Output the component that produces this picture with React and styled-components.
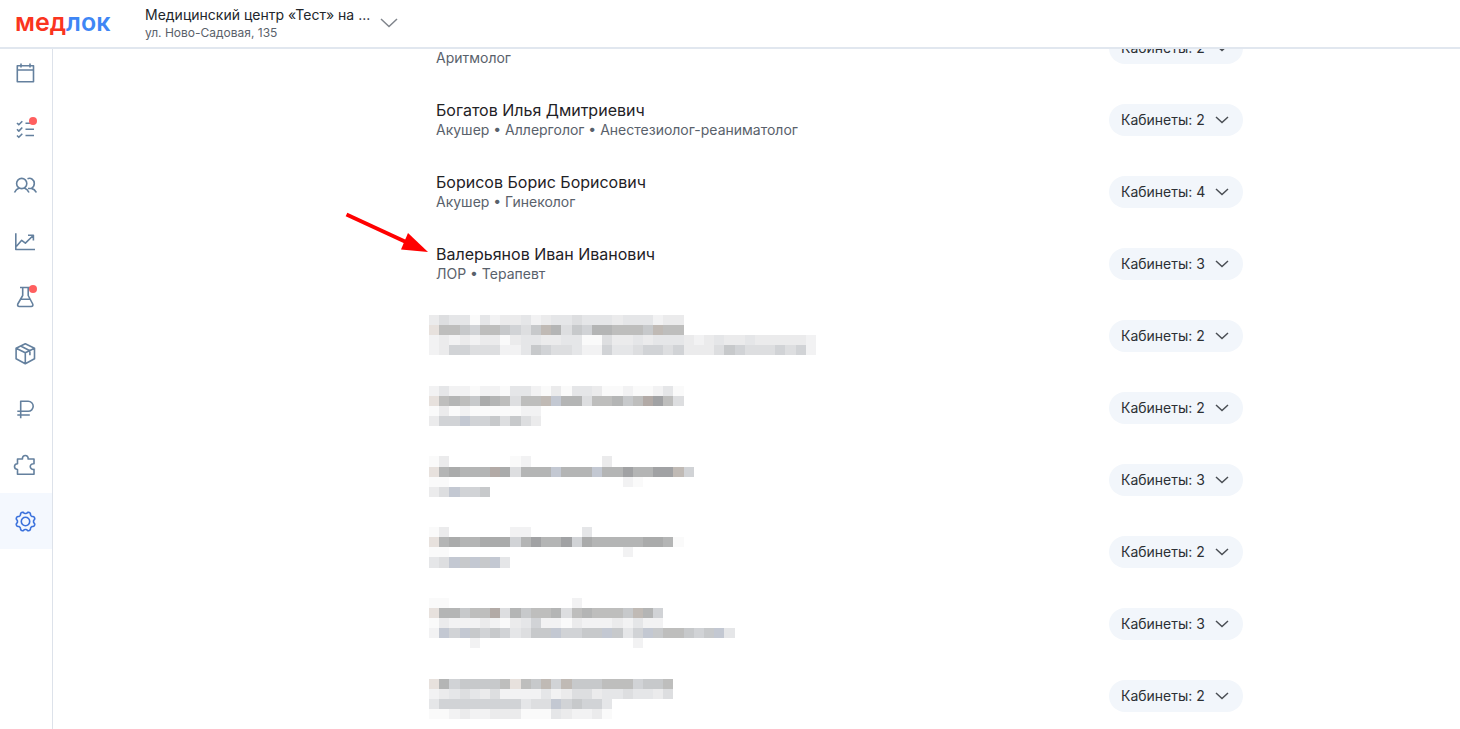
import { useLayoutEffect, useRef } from "react";
import styled, { createGlobalStyle } from "styled-components";

const GlobalStyle = createGlobalStyle`
    *{
        box-sizing: border-box;
    }
    body{
        margin: 0;
        background: #fff;
        color: #22262b;
        font-family: Inter, "Noto Sans", sans-serif;
        font-size: 14px;
        line-height: 20px;
    }
`;

const Page = styled.div`
    display: flex;
    flex-direction: column;
    height: 100vh;
    overflow: hidden;
`;

const Header = styled.header`
    display: flex;
    align-items: center;
    flex-shrink: 0;
    gap: 34px;
    height: 49px;
    padding: 0 15px 2px;
    background: #fff;
    border-bottom: 2px solid #e1e7ef;
    position: relative;
    z-index: 1;
`;

const Logo = styled.a`
    width: 96px;
    font-size: 25px;
    line-height: 28px;
    padding-bottom: 2px;
    font-weight: 600;
    color: #fa3420;
    text-decoration: none;
    span{
        color: #3f86f5;
    }
`;

const ClinicButton = styled.button`
    display: flex;
    align-items: center;
    gap: 10px;
    padding: 0;
    border: 0;
    background: transparent;
    font-family: inherit;
    text-align: left;
    color: #22262b;
    cursor: pointer;
    svg{
        color: #80858c;
    }
`;

const ClinicName = styled.span`
    display: block;
    font-size: 14px;
    line-height: 20px;
`;

const ClinicAddress = styled.span`
    display: block;
    font-size: 12px;
    line-height: 16px;
    color: #5b626b;
`;

const Body = styled.div`
    display: flex;
    flex: 1;
    min-height: 0;
`;

const Sidebar = styled.nav`
    display: flex;
    flex-direction: column;
    flex-shrink: 0;
    width: 53px;
    margin-top: -4px;
    border-right: 1px solid #dde2ea;
`;

const NavLink = styled.a`
    display: flex;
    align-items: center;
    height: 56px;
    padding-left: 13px;
    color: ${props => props.$active ? "#3a71dc" : "#64809e"};
    background: ${props => props.$active ? "#f4f8fe" : "transparent"};
`;

const IconBox = styled.span`
    display: block;
    position: relative;
    width: 24px;
    height: 24px;
    svg{
        display: block;
    }
`;

const Dot = styled.span`
    position: absolute;
    top: 0;
    right: 0;
    width: 8px;
    height: 8px;
    border-radius: 50%;
    background: #ff5f5f;
`;

const Main = styled.main`
    flex: 1;
    min-width: 0;
    padding: 0 217px 0 383px;
    overflow-y: auto;
    scrollbar-width: none;
`;

const DoctorList = styled.ul`
    position: relative;
    margin: 0;
    padding: 0;
    list-style: none;
`;

const DoctorRow = styled.li`
    display: flex;
    align-items: center;
    justify-content: space-between;
    position: relative;
    height: 72px;
`;

const DoctorName = styled.div`
    min-height: 20px;
    font-size: 16px;
    line-height: 20px;
    color: #1f2226;
`;

const Specialties = styled.div`
    font-size: 14px;
    line-height: 20px;
    color: #59616b;
`;

const RoomsButton = styled.button`
    display: flex;
    align-items: center;
    justify-content: space-between;
    width: 134px;
    height: 32px;
    padding: 0 14px 0 12px;
    border: 0;
    border-radius: 16px;
    background: #f2f6fb;
    color: #2c3035;
    font-family: inherit;
    font-size: 14px;
    line-height: 20px;
    cursor: pointer;
    svg{
        color: #4a4e54;
    }
`;

const Arrow = styled.svg`
    position: absolute;
    left: -92px;
    top: -17px;
`;

const Mosaic = styled.svg`
    position: absolute;
    left: -7px;
    top: 303px;
`;

const shades = {
    a: "#fafafa", b: "#f2f2f3", c: "#ebebec", d: "#e5e6e8", e: "#dddee0",
    f: "#d1d3d6", g: "#c7c9cb", h: "#bebebd", i: "#b4b5b5", j: "#aaabab",
    k: "#a1a2a4", w: "#e7e1dd", n: "#c0bab5", m: "#b2aaa6", l: "#c3c8d2",
};

// one string per mosaic line, one letter per cell
const mosaic = {
    0: "ceddadbccdbcddedddcdddbcc",
    1: "whhgfhhgfegniegfiihhhgnhh",
    2: "bcbcbccacddccddaaeccdcdddcbcdccdcccccb",
    3: "bcffeeebbdgfeedbbfddeffefcccegfeeefefb",
    7: "bdbbabbaddbacaddcaabaabda",
    8: "whihgjihehhnliiehhighmkhe",
    9: "acabaaaaabb",
    10: "cfflffgegec",
    14: "ac......ab.......c",
    15: "wijiiimjeiiiliiiliikiikknf",
    16: "aa.................ba",
    17: "celffg",
    21: "ac......bb.....d",
    22: "wijiijjjfikiikfjiiiiijjia",
    23: "aa.................b",
    24: "delglgld",
    28: "aa............b",
    29: "wiighhmeighhiehihhhgnif",
    30: "acbbbcbacdfbbacbbbcbdbb",
    31: "blflgfgfdegglffgglgdflghhgfgld",
    32: "....b...............b",
    36: "wifgggghwhgnfnggghhhfggh",
    37: "bcdedcebbbbdbceecddeddce",
    38: "dffffffffdeelfgffd",
    39: "aabcbbcccaaadcbbca",
};

const gear = Array.from({ length: 96 }, (_, i) => {
    const t = (i / 96) * Math.PI * 2;
    const r = 8.9 + 0.9 * Math.tanh(1.8 * Math.cos(8 * (t - Math.PI / 8)));
    return `${(12.5 + r * Math.cos(t)).toFixed(2)} ${(12.5 + r * Math.sin(t)).toFixed(2)}`;
}).join("L");

const navItems = [
    { title: "Календарь", d: "M4.3 4.7h16.2v16H4.3zM4.3 9h16.2M8 2.5v4M17 2.5v4" },
    { title: "Задачи", dot: true, d: "M4 6l1.8 1.8L9.3 4.2M4 12.3l1.8 1.8 3.5-3.6M4 18.5l1.8 1.8 3.5-3.6M12.5 6.2H21M12.5 12.3H21M12.5 18.5H21" },
    { title: "Пациенты", d: "M8.7 5.4a5.1 5.1 0 1 1 0 10.2a5.1 5.1 0 1 1 0-10.2zM1.500 19.500c1-2.200 2.600-3.700 4.800-4.400M11.200 15.100c2 .6 3.800 2.200 4.800 4.400M14.500 5.700c3.500-1.300 6.800 1.100 6.800 4.800c0 2.400-1.200 4-2.900 4.900c2 .5 3.900 2 4.900 4.100M15 15.500h3.400" },
    { title: "Статистика", d: "M2.8 4.3v16.2H22M3.5 17.3l5.200-6 3.700 2.800 7.800-7.600M15 6.200h5.400v5.400" },
    { title: "Анализы", dot: true, d: "M7 2.500h10.500M9.700 2.500v8L4.800 19c-.6 1.300.1 2.500 1.500 2.500h11.900c1.400 0 2.100-1.200 1.500-2.500L15.200 10.500V2.500M7.500 14.200h9.800" },
    { title: "Склад", d: "M12.300 2.800l9.200 4.400v10.600l-9.200 4.900-9.200-4.900V7.200zM3.100 7.200l9.200 4.600 9.200-4.600M12.300 11.800v10.900M7.700 5l9.200 4.700v4.500" },
    { title: "Финансы", d: "M7.700 21.300V4.300h7.500a5 5 0 0 1 0 10H4.300M4.300 18h12.500" },
    { title: "Интеграции", d: "M4.500 21.300v-4.800c-4-.3-4-5.500 0-5.800V6h5c-.7-4.700 6.300-4.700 5.600 0h5.900v4.800c-5-.6-5 6.200 0 5.600v4.900z" },
    { title: "Настройки", active: true, d: `M${gear}ZM12.500 8.300a4.200 4.200 0 1 1 0 8.400a4.200 4.200 0 1 1 0-8.400z` },
];

const doctors = [
    { specialties: "Аритмолог", rooms: 2 },
    { name: "Богатов Илья Дмитриевич", specialties: "Акушер • Аллерголог • Анестезиолог-реаниматолог", rooms: 2 },
    { name: "Борисов Борис Борисович", specialties: "Акушер • Гинеколог", rooms: 4 },
    { name: "Валерьянов Иван Иванович", specialties: "ЛОР • Терапевт", rooms: 3, marked: true },
    { rooms: 2 },
    { rooms: 2 },
    { rooms: 3 },
    { rooms: 2 },
    { rooms: 3 },
    { rooms: 2 },
];

function Chevron({ width, height }) {
    return (
        <svg width={width} height={height} viewBox={`0 0 ${width} ${height}`} fill="none" stroke="currentColor" strokeWidth="1.5">
            <path d={`M1 1L${width / 2} ${height - 1.5}L${width - 1} 1`} />
        </svg>
    );
}

function NavItem({ title, d, dot, active }) {
    return (
        <NavLink href="#" aria-label={title} $active={active}>
            <IconBox>
                <svg width="24" height="24" viewBox="0 0 24 24" fill="none" stroke="currentColor" strokeWidth="1.6" strokeLinejoin="round">
                    <path d={d} />
                </svg>
                {dot && <Dot />}
            </IconBox>
        </NavLink>
    );
}

function HiddenNames() {
    return (
        <Mosaic width="387" height="404" viewBox="0 0 38 40" preserveAspectRatio="none" shapeRendering="crispEdges" aria-hidden="true">
            {Object.entries(mosaic).map(([y, line]) => [...line].map((cell, x) => (
                shades[cell] && <rect key={`${x}-${y}`} x={x} y={y} width="1" height="1" fill={shades[cell]} />
            )))}
        </Mosaic>
    );
}

function Doctor({ name, specialties, rooms, marked }) {
    return (
        <DoctorRow>
            {marked && (
                <Arrow width="86" height="44" viewBox="0 0 86 44" aria-hidden="true">
                    <path d="M2.5 3.500L62 31" stroke="#f00" strokeWidth="4" />
                    <path d="M64 22L84 41L57 38.500Z" fill="#f00" />
                </Arrow>
            )}
            <div>
                <DoctorName>{name}</DoctorName>
                <Specialties>{specialties}</Specialties>
            </div>
            <RoomsButton type="button">
                Кабинеты: {rooms}
                <Chevron width={14} height={8} />
            </RoomsButton>
        </DoctorRow>
    );
}

export default function App() {
    const mainRef = useRef(null);

    useLayoutEffect(() => {
        mainRef.current.scrollTop = 37;
    }, []);

    return (
        <Page>
            <GlobalStyle />
            <Header>
                <Logo href="#">мед<span>лок</span></Logo>
                <ClinicButton type="button">
                    <span>
                        <ClinicName>Медицинский центр «Тест» на ...</ClinicName>
                        <ClinicAddress>ул. Ново-Садовая, 135</ClinicAddress>
                    </span>
                    <Chevron width={18} height={10} />
                </ClinicButton>
            </Header>
            <Body>
                <Sidebar>
                    {navItems.map(item => <NavItem key={item.title} {...item} />)}
                </Sidebar>
                <Main ref={mainRef}>
                    <DoctorList>
                        {doctors.map((doctor, index) => <Doctor key={index} {...doctor} />)}
                        <HiddenNames />
                    </DoctorList>
                </Main>
            </Body>
        </Page>
    );
}
